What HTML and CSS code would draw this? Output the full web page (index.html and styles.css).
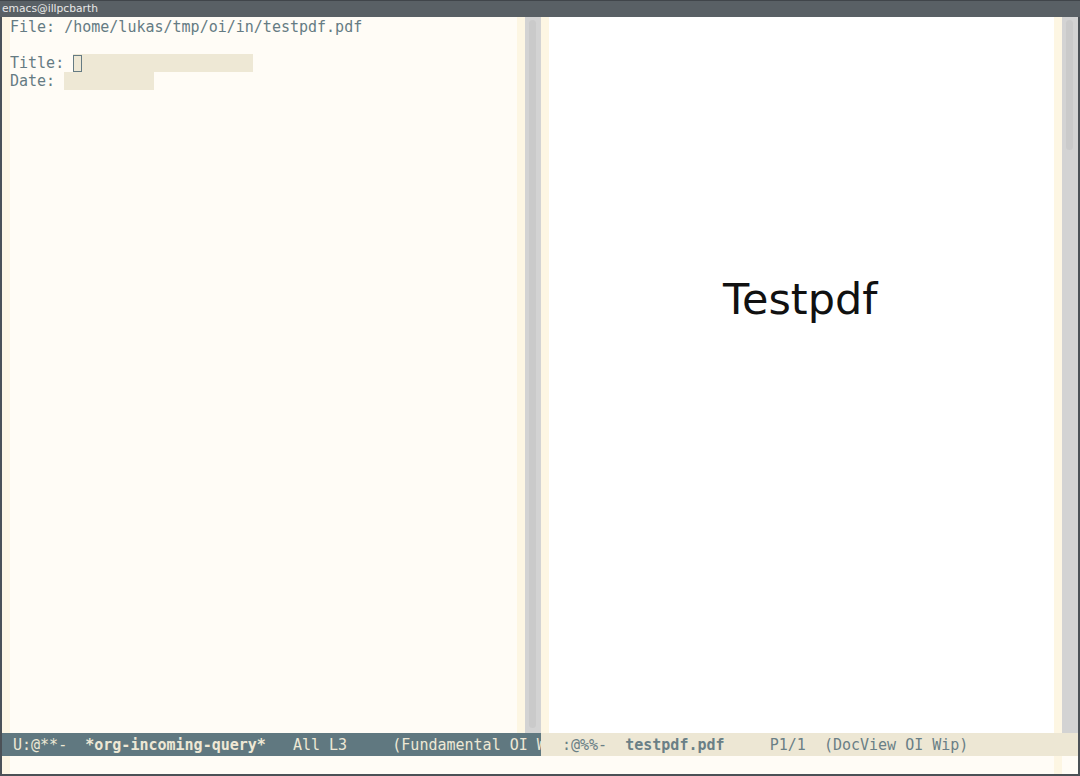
FILE: index.html
```html
<!DOCTYPE html>
<html>
<head>
<meta charset="utf-8">
<link rel="stylesheet" href="styles.css">
</head>
<body>
<div class="frame">
  <div class="titlebar">emacs@illpcbarth</div>
  <div class="windows">
    <div class="window win-left">
      <div class="wbody">
        <div class="fringe"></div>
        <div class="text">
          <div class="line">File: /home/lukas/tmp/oi/in/testpdf.pdf</div>
          <div class="line"> </div>
          <div class="line">Title: <span class="field field-title"><span class="cursor"></span></span></div>
          <div class="line">Date: <span class="field field-date"></span></div>
        </div>
        <div class="fringe"></div>
        <div class="scrollbar"><div class="thumb thumb-full"></div></div>
      </div>
      <div class="modeline ml-active">U:@**-  <b>*org-incoming-query*</b>   All L3     (Fundamental OI W</div>
    </div>
    <div class="window win-right">
      <div class="wbody">
        <div class="fringe"></div>
        <div class="text page">
          <div class="pdftext">Testpdf</div>
        </div>
        <div class="fringe"></div>
        <div class="scrollbar"><div class="thumb thumb-short"></div></div>
      </div>
      <div class="modeline ml-inactive">:@%%-  <b>testpdf.pdf</b>     P1/1  (DocView OI Wip)</div>
    </div>
  </div>
  <div class="minibuffer">
    <div class="fringe"></div>
    <div class="mbtext"></div>
    <div class="fringe"></div>
    <div class="mbrest"></div>
  </div>
</div>
</body>
</html>
```

FILE: styles.css
```css
html, body {
  margin: 0;
  padding: 0;
  background: #4b5156;
}
.frame {
  width: 1080px;
  height: 776px;
  display: flex;
  flex-direction: column;
  background: #4b5156;
  overflow: hidden;
}
.titlebar {
  height: 16px;
  border-top: 1px solid #40454a;
  background: #596065;
  color: #e8e8e8;
  font-family: "DejaVu Sans", sans-serif;
  font-size: 10.7px;
  line-height: 15px;
  padding-left: 2px;
  white-space: nowrap;
}
.windows {
  display: flex;
  height: 739px;
  margin: 0 2px;
}
.window {
  display: flex;
  flex-direction: column;
}
.win-left { width: 539px; }
.win-right { width: 537px; }
.wbody {
  display: flex;
  height: 716px;
}
.fringe {
  width: 8px;
  flex: none;
  background: #fdf6e3;
}
.text {
  flex: 1;
  background: #fffcf6;
  color: #657b83;
  font-family: "DejaVu Sans Mono", monospace;
  font-size: 15px;
  line-height: 18px;
  padding-top: 1px;
  overflow: hidden;
}
.line {
  height: 18px;
  white-space: pre;
}
.field {
  display: inline-block;
  vertical-align: top;
  height: 18px;
  background: #eee8d5;
}
.field-title { width: 180px; }
.field-date { width: 90px; }
.cursor {
  display: block;
  width: 7px;
  height: 15px;
  margin-top: 1px;
  border: 1px solid #657b83;
}
.scrollbar {
  width: 16px;
  flex: none;
  background: #d3d3d3;
  padding: 3px 5px 0 4px;
  box-sizing: border-box;
}
.thumb {
  width: 7px;
  border-radius: 4px;
  background: #cacaca;
}
.thumb-full { height: 708px; }
.thumb-short { height: 130px; }
.page {
  background: #ffffff;
  padding-top: 258px;
  padding-left: 174px;
}
.pdftext {
  font-family: "DejaVu Sans", sans-serif;
  font-size: 43px;
  line-height: 48px;
  color: #111111;
  white-space: nowrap;
}
.modeline {
  height: 23px;
  font-family: "DejaVu Sans Mono", monospace;
  font-size: 15px;
  line-height: 24px;
  white-space: pre;
  overflow: hidden;
}
.modeline b { font-weight: bold; }
.ml-active {
  background: #607880;
  color: #eee8d5;
  padding-left: 11px;
}
.ml-inactive {
  background: #ede7d4;
  color: #6a7f86;
  padding-left: 21px;
}
.minibuffer {
  display: flex;
  height: 18px;
  margin: 0 2px;
}
.mbtext {
  width: 1044px;
  background: #fffcf6;
}
.mbrest {
  flex: 1;
  background: #fffcf6;
}
```
